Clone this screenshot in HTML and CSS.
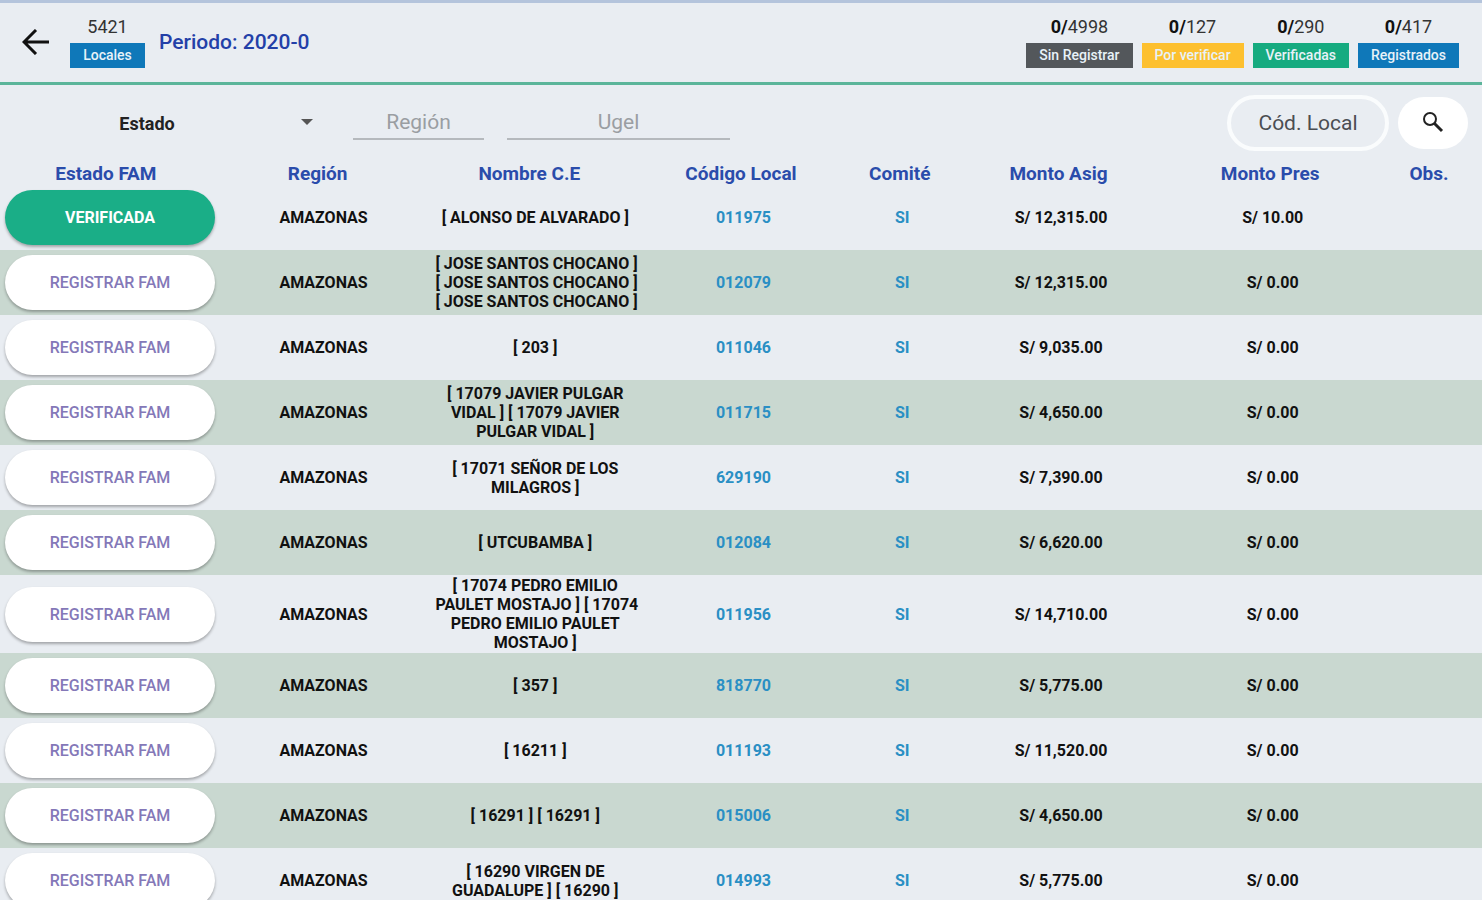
FILE: index.html
```html
<!DOCTYPE html>
<html lang="es">
<head>
    <meta charset="UTF-8">
    <meta name="viewport" content="width=device-width, initial-scale=1.0">
    <title>Periodo: 2020-0</title>
    <link rel="stylesheet" href="styles.css">
</head>
<body>
    <header class="topbar">
        <button class="back" type="button" aria-label="Volver">
            <svg width="28" height="26" viewBox="0 0 28 26" fill="none" stroke="#111" stroke-width="3">
                <path d="M27 13H3M14 1L2 13l12 12"/>
            </svg>
        </button>
        <div class="stat">
            <span class="count">5421</span>
            <span class="tag blue">Locales</span>
        </div>
        <h1>Periodo: 2020-0</h1>
        <div class="stats">
            <div class="stat">
                <span class="count"><b>0/</b>4998</span>
                <span class="tag gray">Sin Registrar</span>
            </div>
            <div class="stat">
                <span class="count"><b>0/</b>127</span>
                <span class="tag yellow">Por verificar</span>
            </div>
            <div class="stat">
                <span class="count"><b>0/</b>290</span>
                <span class="tag green">Verificadas</span>
            </div>
            <div class="stat">
                <span class="count"><b>0/</b>417</span>
                <span class="tag blue">Registrados</span>
            </div>
        </div>
    </header>

    <form class="filters">
        <div class="select-box">
            <select id="estado" aria-label="Estado">
                <option>Estado</option>
                <option>Verificada</option>
                <option>Registrar FAM</option>
            </select>
        </div>
        <input class="line region" type="text" placeholder="Región" aria-label="Región">
        <input class="line ugel" type="text" placeholder="Ugel" aria-label="Ugel">
        <input class="codigo" type="text" placeholder="Cód. Local" aria-label="Cód. Local">
        <button class="search" type="button" aria-label="Buscar">
            <svg width="22" height="22" viewBox="0 0 22 22" fill="none" stroke="#222">
                <circle cx="8" cy="7" r="6" stroke-width="2"/>
                <path d="M12 11l8 8" stroke-width="3"/>
            </svg>
        </button>
    </form>

    <table>
        <colgroup>
            <col class="w2"><col class="w2"><col class="w2"><col class="w2">
            <col class="w1"><col class="w2"><col class="w2"><col class="w1">
        </colgroup>
        <thead>
            <tr>
                <th>Estado FAM</th>
                <th>Región</th>
                <th>Nombre C.E</th>
                <th>Código Local</th>
                <th>Comité</th>
                <th>Monto Asig</th>
                <th>Monto Pres</th>
                <th>Obs.</th>
            </tr>
        </thead>
        <tbody>
            <tr>
                <td><button class="fam done" type="button">VERIFICADA</button></td>
                <td class="wide">AMAZONAS</td>
                <td class="wide">[ ALONSO DE ALVARADO ]</td>
                <td class="info">011975</td>
                <td class="info">SI</td>
                <td>S/ 12,315.00</td>
                <td>S/ 10.00</td>
                <td></td>
            </tr>
            <tr>
                <td><button class="fam" type="button">REGISTRAR FAM</button></td>
                <td class="wide">AMAZONAS</td>
                <td class="wide">[ JOSE SANTOS CHOCANO ]<br>[ JOSE SANTOS CHOCANO ]<br>[ JOSE SANTOS CHOCANO ]</td>
                <td class="info">012079</td>
                <td class="info">SI</td>
                <td>S/ 12,315.00</td>
                <td>S/ 0.00</td>
                <td></td>
            </tr>
            <tr>
                <td><button class="fam" type="button">REGISTRAR FAM</button></td>
                <td class="wide">AMAZONAS</td>
                <td class="wide">[ 203 ]</td>
                <td class="info">011046</td>
                <td class="info">SI</td>
                <td>S/ 9,035.00</td>
                <td>S/ 0.00</td>
                <td></td>
            </tr>
            <tr>
                <td><button class="fam" type="button">REGISTRAR FAM</button></td>
                <td class="wide">AMAZONAS</td>
                <td class="wide">[ 17079 JAVIER PULGAR<br>VIDAL ] [ 17079 JAVIER<br>PULGAR VIDAL ]</td>
                <td class="info">011715</td>
                <td class="info">SI</td>
                <td>S/ 4,650.00</td>
                <td>S/ 0.00</td>
                <td></td>
            </tr>
            <tr>
                <td><button class="fam" type="button">REGISTRAR FAM</button></td>
                <td class="wide">AMAZONAS</td>
                <td class="wide">[ 17071 SEÑOR DE LOS<br>MILAGROS ]</td>
                <td class="info">629190</td>
                <td class="info">SI</td>
                <td>S/ 7,390.00</td>
                <td>S/ 0.00</td>
                <td></td>
            </tr>
            <tr>
                <td><button class="fam" type="button">REGISTRAR FAM</button></td>
                <td class="wide">AMAZONAS</td>
                <td class="wide">[ UTCUBAMBA ]</td>
                <td class="info">012084</td>
                <td class="info">SI</td>
                <td>S/ 6,620.00</td>
                <td>S/ 0.00</td>
                <td></td>
            </tr>
            <tr>
                <td><button class="fam" type="button">REGISTRAR FAM</button></td>
                <td class="wide">AMAZONAS</td>
                <td class="wide">[ 17074 PEDRO EMILIO<br>PAULET MOSTAJO ] [ 17074<br>PEDRO EMILIO PAULET<br>MOSTAJO ]</td>
                <td class="info">011956</td>
                <td class="info">SI</td>
                <td>S/ 14,710.00</td>
                <td>S/ 0.00</td>
                <td></td>
            </tr>
            <tr>
                <td><button class="fam" type="button">REGISTRAR FAM</button></td>
                <td class="wide">AMAZONAS</td>
                <td class="wide">[ 357 ]</td>
                <td class="info">818770</td>
                <td class="info">SI</td>
                <td>S/ 5,775.00</td>
                <td>S/ 0.00</td>
                <td></td>
            </tr>
            <tr>
                <td><button class="fam" type="button">REGISTRAR FAM</button></td>
                <td class="wide">AMAZONAS</td>
                <td class="wide">[ 16211 ]</td>
                <td class="info">011193</td>
                <td class="info">SI</td>
                <td>S/ 11,520.00</td>
                <td>S/ 0.00</td>
                <td></td>
            </tr>
            <tr>
                <td><button class="fam" type="button">REGISTRAR FAM</button></td>
                <td class="wide">AMAZONAS</td>
                <td class="wide">[ 16291 ] [ 16291 ]</td>
                <td class="info">015006</td>
                <td class="info">SI</td>
                <td>S/ 4,650.00</td>
                <td>S/ 0.00</td>
                <td></td>
            </tr>
            <tr>
                <td><button class="fam" type="button">REGISTRAR FAM</button></td>
                <td class="wide">AMAZONAS</td>
                <td class="wide">[ 16290 VIRGEN DE<br>GUADALUPE ] [ 16290 ]</td>
                <td class="info">014993</td>
                <td class="info">SI</td>
                <td>S/ 5,775.00</td>
                <td>S/ 0.00</td>
                <td></td>
            </tr>
        </tbody>
    </table>
</body>
</html>
```
FILE: styles.css
```css
* {
    box-sizing: border-box;
}
html {
    scrollbar-width: none;
}
body {
    margin: 0;
    font-family: Roboto, "Liberation Sans", sans-serif;
    font-size: 16px;
    color: #111;
    background-color: #e9edf2;
}
button, input, select {
    font-family: inherit;
    border: none;
    padding: 0;
    background: none;
}
.topbar {
    display: flex;
    align-items: center;
    height: 85px;
    padding: 0 23px 2px 22px;
    border-top: 3px solid #b4c4dc;
    border-bottom: 3px solid #5bb59a;
}
.back {
    display: flex;
    width: 28px;
    margin-right: 20px;
}
.stat {
    display: flex;
    flex-direction: column;
    align-items: center;
    gap: 4px;
}
.count {
    font-size: 18px;
    line-height: 24px;
    color: #333;
}
.count b {
    color: #111;
}
.tag {
    min-width: 75px;
    padding: 0 13px;
    font-size: 14px;
    font-weight: 500;
    line-height: 25px;
    text-align: center;
    color: #e8f2f8;
}
.blue { background-color: #0f78b9; }
.gray { background-color: #53575b; }
.yellow { background-color: #fdc02f; }
.green { background-color: #16ab80; }
h1 {
    margin: 0 0 0 14px;
    font-size: 21px;
    font-weight: 500;
    color: #2340a8;
}
.stats {
    display: flex;
    gap: 9px;
    margin-left: auto;
}
.filters {
    display: flex;
    align-items: center;
    height: 77px;
    padding: 0 14px 2px 0;
}
.select-box {
    position: relative;
    width: 330px;
    margin-right: 23px;
}
.select-box::after {
    content: "";
    position: absolute;
    right: 17px;
    top: 50%;
    margin-top: -4px;
    border: 6px solid transparent;
    border-top-color: #555;
    border-bottom: none;
    pointer-events: none;
}
select {
    width: 100%;
    height: 40px;
    padding: 2px 36px 0 0;
    appearance: none;
    font-size: 18px;
    font-weight: 700;
    text-align: center;
    text-align-last: center;
    color: #222;
}
input {
    text-align: center;
}
input::placeholder {
    color: #9a9ea2;
    opacity: 1;
}
.line {
    height: 34px;
    border-bottom: 2px solid #b5b9bd;
    font-size: 21px;
}
.region {
    width: 131px;
    margin-right: 23px;
}
.ugel {
    width: 223px;
}
.codigo {
    width: 162px;
    height: 56px;
    margin-left: auto;
    margin-right: 9px;
    border: 4px solid #fafcfd;
    border-radius: 28px;
    font-size: 21px;
}
.codigo::placeholder {
    color: #4b4e52;
}
.search {
    display: flex;
    align-items: center;
    justify-content: center;
    width: 70px;
    height: 52px;
    border-radius: 26px;
    background-color: #fff;
}
table {
    width: 100%;
    table-layout: fixed;
    border-collapse: collapse;
}
/* 14 units across the row */
.w2 { width: 14.28%; }
.w1 { width: 7.14%; }
th {
    height: 23px;
    padding: 0;
    font-size: 19px;
    font-weight: 700;
    line-height: 23px;
    color: #2a4cab;
}
td {
    height: 65px;
    padding: 1px 0 1px 5px;
    font-weight: 700;
    line-height: 19px;
    text-align: center;
    white-space: nowrap;
}
.wide {
    padding-left: 12px;
}
tbody tr:nth-child(even) {
    background-color: #c9d8d0;
}
.info {
    color: #2a8fc4;
}
.fam {
    display: block;
    width: 210px;
    height: 55px;
    border-radius: 28px;
    font-size: 16px;
    font-weight: 500;
    color: #8478b8;
    background-color: #fff;
    box-shadow: 0 2px 3px rgba(0, 0, 0, 0.3);
}
.fam.done {
    font-weight: 700;
    color: #fff;
    background-color: #1aae87;
}
```
